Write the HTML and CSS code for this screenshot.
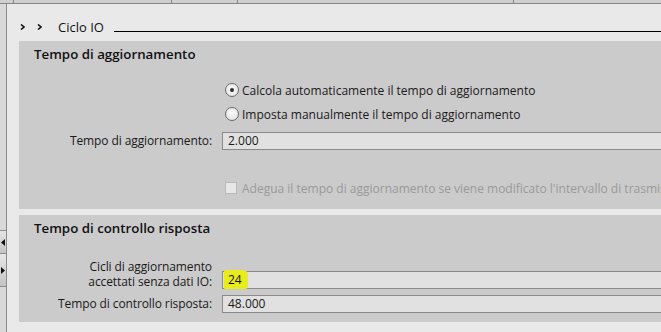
FILE: index.html
```html
<!DOCTYPE html>
<html lang="it">
<head>
<meta charset="utf-8">
<title>Ciclo IO</title>
<link rel="stylesheet" href="styles.css">
</head>
<body>
<div class="topbar">
  <span class="tick t1"></span>
  <span class="tick t2"></span>
  <span class="tick t3"></span>
  <span class="tick t4"></span>
</div>
<div class="body">
  <aside class="strip">
    <div class="stripbtn first"><svg width="4" height="7" viewBox="0 0 4 7"><path d="M4 0 L0 3.5 L4 7 Z" fill="#111"/></svg></div>
    <div class="stripbtn"><svg width="4" height="7" viewBox="0 0 4 7"><path d="M0 0 L4 3.5 L0 7 Z" fill="#111"/></svg></div>
  </aside>
  <main class="content">
    <div class="head">
      <svg class="chev" width="5" height="6" viewBox="0 0 5 6"><path d="M1 0.5 L4 3 L1 5.5" fill="none" stroke="#111" stroke-width="1.6"/></svg>
      <svg class="chev" width="5" height="6" viewBox="0 0 5 6"><path d="M1 0.5 L4 3 L1 5.5" fill="none" stroke="#111" stroke-width="1.6"/></svg>
      <span class="headtitle">Ciclo IO</span>
      <span class="headline"></span>
    </div>

    <section class="box box1">
      <h2 class="boxtitle">Tempo di aggiornamento</h2>
      <div class="row r-radio1">
        <span class="label"></span>
        <label class="opt"><span class="radio on"></span>Calcola automaticamente il tempo di aggiornamento</label>
      </div>
      <div class="row r-radio2">
        <span class="label"></span>
        <label class="opt"><span class="radio"></span>Imposta manualmente il tempo di aggiornamento</label>
      </div>
      <div class="row r-input1">
        <span class="label">Tempo di aggiornamento:</span>
        <div class="field">2.000</div>
      </div>
      <div class="row r-check">
        <span class="label"></span>
        <label class="opt disabled"><span class="check"></span>Adegua il tempo di aggiornamento se viene modificato l'intervallo di trasmissione</label>
      </div>
    </section>

    <section class="box box2">
      <h2 class="boxtitle">Tempo di controllo risposta</h2>
      <div class="row r-cicli">
        <span class="label two">Cicli di aggiornamento<br>accettati senza dati IO:</span>
        <div class="field"><span class="mark">24</span></div>
      </div>
      <div class="row r-resp">
        <span class="label">Tempo di controllo risposta:</span>
        <div class="field">48.000</div>
      </div>
    </section>
  </main>
</div>
</body>
</html>
```
FILE: styles.css
```css
* { box-sizing: border-box; }
html, body { margin: 0; padding: 0; }
body {
  width: 661px;
  height: 332px;
  overflow: hidden;
  background: #e9e9e9;
  font-family: "Open Sans", "Noto Sans", sans-serif;
  font-size: 12px;
  color: #1a1a1a;
}
.topbar {
  position: relative;
  height: 4px;
  background: #cfcfcf;
  border-bottom: 1px solid #858585;
}
.tick {
  position: absolute;
  top: 0;
  width: 1px;
  height: 3px;
  background: #858585;
}
.t1 { left: 13px; }
.t2 { left: 171px; }
.t3 { left: 237px; }
.t4 { left: 513px; }

.body {
  display: flex;
  height: 328px;
}
.strip {
  width: 7px;
  flex: none;
  background: #d9d9d9;
  border-right: 1px solid #8a8a8a;
  padding-top: 226px;
}
.stripbtn {
  height: 24px;
  border-top: 1px solid #8c8c8c;
  background: linear-gradient(#e6e6e6, #c4c4c4);
  display: flex;
  align-items: center;
  padding-left: 1px;
}
.stripbtn.first { height: 23px; }
.stripbtn + .stripbtn { height: 34px; border-bottom: 1px solid #8c8c8c; }

.content {
  flex: 1;
  padding-left: 12px;
  min-width: 0;
}
.head {
  height: 37px;
  display: flex;
  align-items: center;
  padding-top: 8px;
}
.chev { flex: none; }
.chev:first-child { margin-left: 1px; }
.chev + .chev { margin-left: 12px; }
.headtitle {
  margin-left: 16px;
  font-size: 13px;
  color: #111;
}
.headline {
  flex: 1;
  height: 1px;
  background: #000;
  margin-left: 10px;
  margin-top: 10px;
}

.box {
  background: #cbcbcb;
  overflow: hidden;
}
.box1 { height: 168px; }
.box2 { height: 107px; margin-top: 6px; }
.boxtitle {
  margin: 0;
  font-size: 13.3px;
  font-weight: 600;
  line-height: 19px;
  padding: 4px 0 0 15px;
  color: #111;
}
.row {
  display: grid;
  grid-template-columns: 193px 1fr;
  column-gap: 10px;
  align-items: center;
}
.label {
  text-align: right;
  white-space: nowrap;
  line-height: 14px;
  letter-spacing: -0.1px;
}
.label.two { line-height: 15px; }
.opt {
  display: flex;
  align-items: center;
  white-space: nowrap;
  padding-left: 3px;
  height: 18px;
}
.radio {
  width: 14px;
  height: 14px;
  border-radius: 50%;
  border: 1px solid #6a6a6a;
  background: radial-gradient(circle at 50% 40%, #fbfbfb, #dedede);
  margin-right: 3px;
  display: flex;
  align-items: center;
  justify-content: center;
  flex: none;
}
.radio.on::after {
  content: "";
  width: 4px;
  height: 4px;
  border-radius: 50%;
  background: #2b2b2b;
}
.check {
  width: 12px;
  height: 12px;
  border: 1px solid #b9b9b9;
  background: #e7e7e7;
  margin-right: 5px;
  flex: none;
}
.disabled { color: #9a9a9a; }

.field {
  height: 18px;
  border: 1px solid #8a8a8a;
  border-right: none;
  background: #e1e1e1;
  padding-left: 5px;
  line-height: 16px;
}
.mark {
  display: inline-block;
  background: #e9ec1c;
  margin-left: -4px;
  padding: 2px 6px 1px 4px;
  margin-top: -3px;
  line-height: 16px;
  border-radius: 2px 5px 3px 1px;
  color: #111;
}

.r-radio1 { margin-top: 17px; }
.r-radio2 { margin-top: 6px; }
.r-input1 { margin-top: 9px; }
.r-check { margin-top: 29px; }

.r-cicli { margin-top: 21px; align-items: end; }
.r-cicli .label { padding-bottom: 0; }
.r-resp { margin-top: 6px; }
```
